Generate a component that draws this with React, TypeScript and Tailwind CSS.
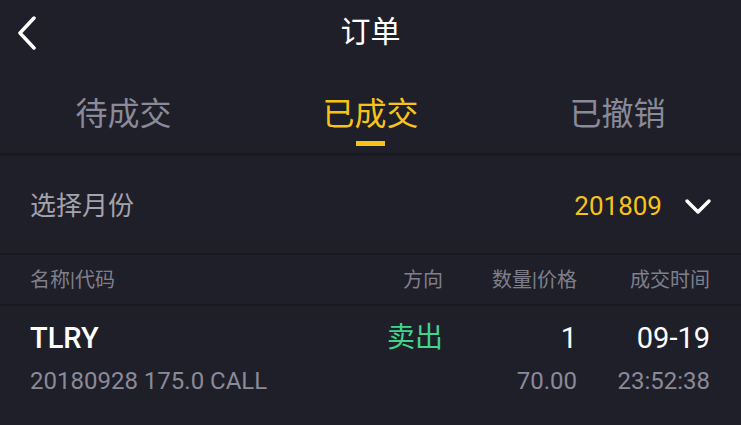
const font = { fontFamily: 'Roboto, "Noto Sans CJK SC", sans-serif' };

function BackIcon() {
  return (
    <svg width="24" height="34" viewBox="0 0 24 34" fill="none">
      <path d="M19 2 L5 17 L19 32" stroke="white" strokeWidth="3.5" strokeLinecap="round" strokeLinejoin="round" />
    </svg>
  );
}

function ChevronDown() {
  return (
    <svg width="28" height="18" viewBox="0 0 28 18" fill="none">
      <path d="M3 3 L14 14 L25 3" stroke="white" strokeWidth="3.5" strokeLinecap="round" strokeLinejoin="round" />
    </svg>
  );
}

const tabs = ["待成交", "已成交", "已撤销"];

export default function App() {
  return (
    <div className="h-[425px] w-[741px] overflow-hidden bg-[#1f1f29]" style={font}>
      {/* header */}
      <div className="relative flex h-[64px] items-center justify-center">
        <div className="absolute left-[15px] top-[16px]">
          <BackIcon />
        </div>
        <h1 className="text-[30px] leading-none text-white">订单</h1>
      </div>

      {/* tabs */}
      <div className="grid h-[92px] grid-cols-3 border-b-[3px] border-[#191920]">
        {tabs.map((t, i) => (
          <div key={t} className="flex flex-col items-center pt-[34px]">
            <span
              className={
                i === 1
                  ? "text-[32px] leading-none text-[#f7c31b]"
                  : "text-[32px] leading-none text-[#8a8a99]"
              }
            >
              {t}
            </span>
            {i === 1 && <div className="mt-[11px] h-[5px] w-[29px] bg-[#f7c31b]" />}
          </div>
        ))}
      </div>

      {/* month select */}
      <div className="flex h-[99px] items-center justify-between border-b-[2px] border-[#191920] pl-[30px] pr-[29px] pt-[4px]">
        <span className="text-[26px] text-[#a3a3ad]">选择月份</span>
        <div className="flex items-center gap-[22px]">
          <span className="text-[26px] text-[#f7c31b]">201809</span>
          <ChevronDown />
        </div>
      </div>

      {/* table header */}
      <div className="flex h-[51px] items-center border-b-[2px] border-[#191920] pl-[30px] pr-[31px] text-[20px] text-[#7f7f8c]">
        <span className="flex-1">名称|代码</span>
        <span className="w-[60px] text-right">方向</span>
        <span className="w-[134px] text-right">数量|价格</span>
        <span className="w-[133px] text-right">成交时间</span>
      </div>

      {/* row */}
      <div className="flex pl-[30px] pr-[31px] pt-[14px]">
        <div className="flex flex-1 flex-col">
          <span className="text-[29px] font-medium leading-[36px] text-white">TLRY</span>
          <span className="mt-[10px] text-[24px] leading-[30px] text-[#8a8a99]">20180928 175.0 CALL</span>
        </div>
        <div className="w-[60px] text-right">
          <span className="text-[28px] leading-[36px] text-[#3fd68b]">卖出</span>
        </div>
        <div className="flex w-[134px] flex-col items-end">
          <span className="text-[29px] leading-[36px] text-white">1</span>
          <span className="mt-[10px] text-[24px] leading-[30px] text-[#8a8a99]">70.00</span>
        </div>
        <div className="flex w-[133px] flex-col items-end">
          <span className="text-[29px] leading-[36px] text-white">09-19</span>
          <span className="mt-[10px] text-[24px] leading-[30px] text-[#8a8a99]">23:52:38</span>
        </div>
      </div>
    </div>
  );
}
